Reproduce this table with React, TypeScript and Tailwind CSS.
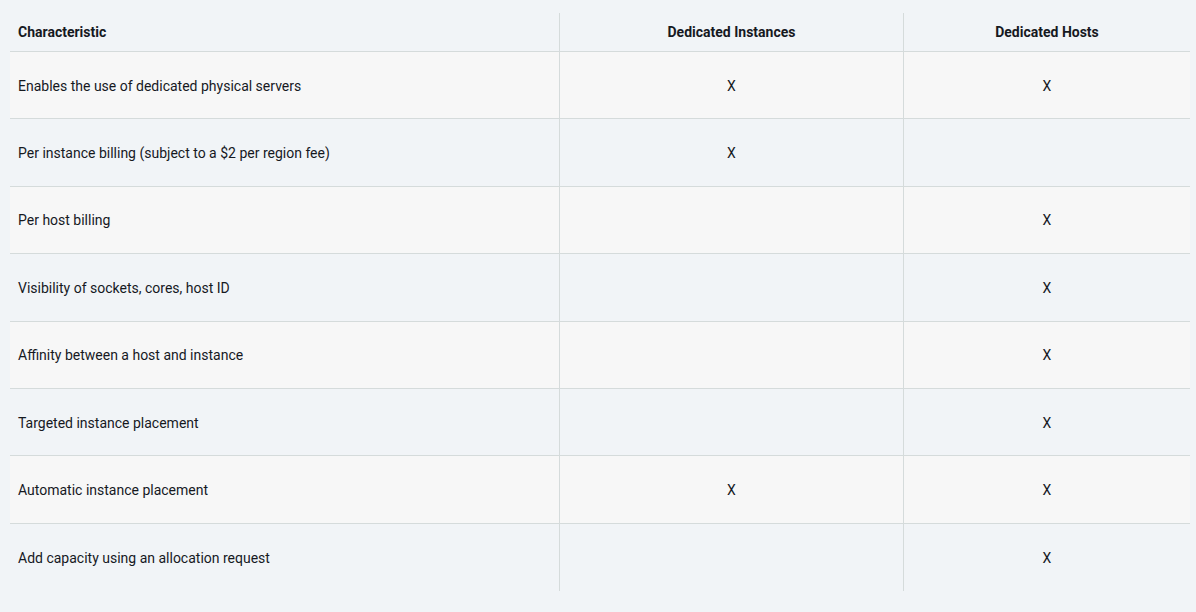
import React from "react";

const rows: [string, boolean, boolean][] = [
  ["Enables the use of dedicated physical servers", true, true],
  ["Per instance billing (subject to a $2 per region fee)", true, false],
  ["Per host billing", false, true],
  ["Visibility of sockets, cores, host ID", false, true],
  ["Affinity between a host and instance", false, true],
  ["Targeted instance placement", false, true],
  ["Automatic instance placement", true, true],
  ["Add capacity using an allocation request", false, true],
];

export default function App() {
  return (
    <div
      className="w-[1196px] h-[612px] bg-[#f1f4f7] pt-[13px] px-[10px] text-[#16191f] text-[14px]"
      style={{ fontFamily: "Roboto, 'Open Sans', sans-serif" }}
    >
      <div className="w-[1180px] flex flex-col">
        <div className="flex h-[39px] border-b border-[#d5dbdb] font-bold">
          <div className="w-[549px] flex items-end pb-[8px] pl-[8px]">Characteristic</div>
          <div className="w-[344px] border-l border-[#d5dbdb] flex items-end justify-center pb-[8px]">Dedicated Instances</div>
          <div className="flex-1 border-l border-[#d5dbdb] flex items-end justify-center pb-[8px]">Dedicated Hosts</div>
        </div>
        {rows.map(([label, a, b], i) => (
          <div
            key={i}
            className={
              "flex h-[67.4px] " +
              (i % 2 === 0 ? "bg-[#f7f7f7] " : "") +
              (i < rows.length - 1 ? "border-b border-[#d5dbdb]" : "")
            }
          >
            <div className="w-[549px] flex items-center pl-[8px] pt-[2px]">{label}</div>
            <div className="w-[344px] border-l border-[#d5dbdb] flex items-center justify-center pt-[2px]">{a ? "X" : ""}</div>
            <div className="flex-1 border-l border-[#d5dbdb] flex items-center justify-center pt-[2px]">{b ? "X" : ""}</div>
          </div>
        ))}
      </div>
    </div>
  );
}
